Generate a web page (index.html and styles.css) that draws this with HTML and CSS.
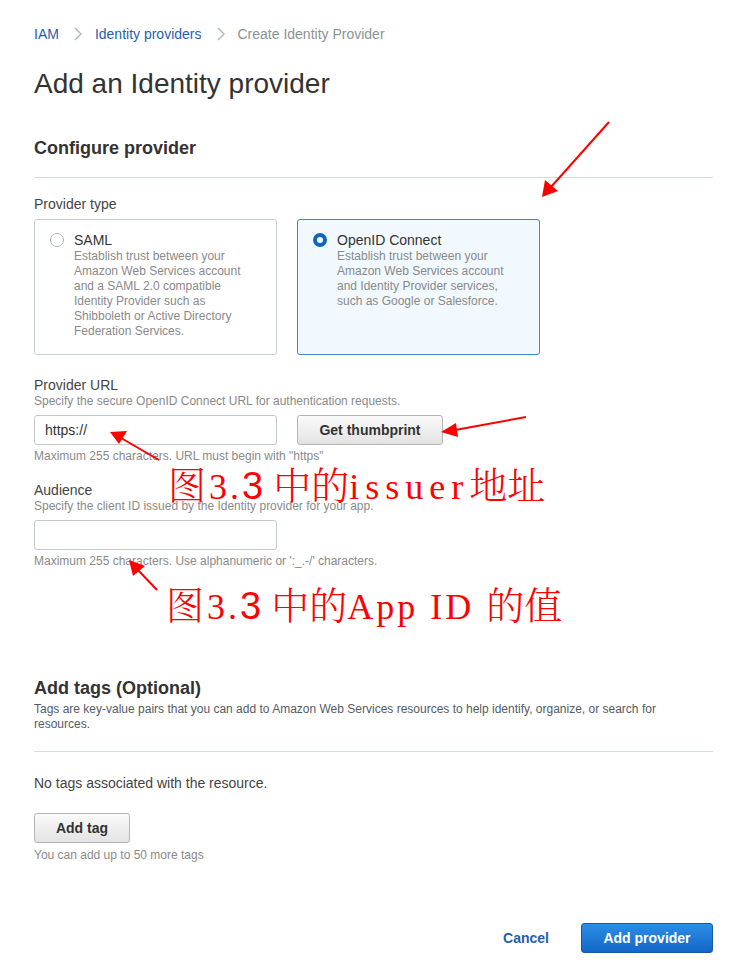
FILE: index.html
```html
<!DOCTYPE html>
<html lang="en">
<head>
<meta charset="utf-8">
<title>Create Identity Provider</title>
<link rel="stylesheet" href="styles.css">
</head>
<body>
<div class="page">
  <nav class="crumbs">
    <a class="crumb-link" href="#">IAM</a>
    <span class="chev"><svg width="10" height="14" viewBox="0 0 10 14"><path d="M2 1l6 6-6 6" fill="none" stroke="#aab7b8" stroke-width="1.4"/></svg></span>
    <a class="crumb-link" href="#">Identity providers</a>
    <span class="chev"><svg width="10" height="14" viewBox="0 0 10 14"><path d="M2 1l6 6-6 6" fill="none" stroke="#aab7b8" stroke-width="1.4"/></svg></span>
    <span class="crumb-current">Create Identity Provider</span>
  </nav>

  <h1 class="title">Add an Identity provider</h1>

  <section class="section">
    <h2 class="section-head">Configure provider</h2>

    <div class="field-label">Provider type</div>
    <div class="cards">
      <label class="card">
        <span class="radio"></span>
        <span class="card-body">
          <span class="card-title">SAML</span>
          <span class="card-desc">Establish trust between your Amazon Web Services account and a SAML 2.0 compatible Identity Provider such as Shibboleth or Active Directory Federation Services.</span>
        </span>
      </label>
      <label class="card card-selected">
        <span class="radio radio-on"></span>
        <span class="card-body">
          <span class="card-title">OpenID Connect</span>
          <span class="card-desc">Establish trust between your Amazon Web Services account and Identity Provider services, such as Google or Salesforce.</span>
        </span>
      </label>
    </div>

    <div class="field first-field">
      <div class="field-label">Provider URL</div>
      <div class="field-desc">Specify the secure OpenID Connect URL for authentication requests.</div>
      <div class="input-row">
        <div class="input">https://</div>
        <button class="btn">Get thumbprint</button>
      </div>
      <div class="field-hint">Maximum 255 characters. URL must begin with "https"</div>
    </div>

    <div class="field">
      <div class="field-label">Audience</div>
      <div class="field-desc">Specify the client ID issued by the Identity provider for your app.</div>
      <div class="input-row">
        <div class="input"></div>
      </div>
      <div class="field-hint">Maximum 255 characters. Use alphanumeric or ':_.-/' characters.</div>
    </div>
  </section>

  <section class="tags">
    <h2 class="tags-head">Add tags (Optional)</h2>
    <p class="tags-desc">Tags are key-value pairs that you can add to Amazon Web Services resources to help identify, organize, or search for resources.</p>
    <p class="no-tags">No tags associated with the resource.</p>
    <button class="btn btn-tag">Add tag</button>
    <div class="field-hint tag-hint">You can add up to 50 more tags</div>
  </section>

  <footer class="actions">
    <a class="cancel" href="#">Cancel</a>
    <button class="btn-primary">Add provider</button>
  </footer>

  <div class="note note-1">图<span class="n-lat n-three">3.</span><span class="n-num">3</span>中的<span class="n-lat n-issuer">issuer</span>地址</div>
  <div class="note note-2">图<span class="n-lat n-three">3.</span><span class="n-num">3</span>中的<span class="n-lat n-app">App ID </span>的值</div>

  <svg class="arrows" width="748" height="974" viewBox="0 0 748 974">
    <g stroke="#ff0000" stroke-width="2" fill="none">
      <line x1="609" y1="122" x2="551" y2="187"/>
      <line x1="526" y1="417" x2="455" y2="430"/>
      <line x1="159" y1="460" x2="121" y2="438"/>
      <line x1="157" y1="590" x2="137" y2="569"/>
    </g>
    <g fill="#ff0000">
      <polygon points="542,197 545,180 558,191"/>
      <polygon points="441,432 456,423 458,437"/>
      <polygon points="110,432 127,431 119,444"/>
      <polygon points="129,560 145,566 133,576"/>
    </g>
  </svg>
</div>
</body>
</html>
```

FILE: styles.css
```css
* { box-sizing: border-box; }

html, body {
  margin: 0;
  padding: 0;
  background: #ffffff;
}

body {
  font-family: "Liberation Sans", Arial, sans-serif;
  color: #333333;
}

.page {
  position: relative;
  width: 748px;
  min-height: 974px;
  padding: 24px 35px 0 34px;
}

.crumbs {
  display: flex;
  align-items: center;
  height: 20px;
  font-size: 14px;
}

.crumb-link {
  color: #1f5fb0;
  text-decoration: none;
}

.chev {
  display: flex;
  align-items: center;
  margin: 0 12px 0 14px;
}

.crumb-current {
  color: #8a9394;
}

.title {
  margin: 23px 0 0;
  font-size: 28px;
  line-height: 34px;
  font-weight: normal;
  color: #333333;
}

.section-head {
  margin: 36px 0 0;
  padding-bottom: 18px;
  border-bottom: 1px solid #d5dbdb;
  font-size: 18px;
  line-height: 22px;
  font-weight: bold;
  color: #333333;
}

.field-label {
  margin-top: 17px;
  font-size: 14px;
  line-height: 18px;
  color: #444444;
}

.cards {
  display: flex;
  gap: 20px;
  margin-top: 6px;
}

.card {
  display: flex;
  width: 243px;
  height: 136px;
  padding: 12px 14px 0 15px;
  border: 1px solid #c9cfcf;
  border-radius: 3px;
  background: #ffffff;
}

.card-selected {
  border-color: #3d87d0;
  background: #f1f8fe;
}

.radio {
  flex: none;
  width: 14px;
  height: 14px;
  margin-top: 1px;
  border: 1px solid #aab7b8;
  border-radius: 50%;
  background: #ffffff;
}

.radio-on {
  border: 4px solid #0f66bd;
}

.card-body {
  display: flex;
  flex-direction: column;
  margin-left: 10px;
}

.card-title {
  font-size: 14px;
  line-height: 16px;
  color: #333333;
}

.card-desc {
  margin-top: 1px;
  font-size: 12px;
  line-height: 15px;
  color: #8a8a8a;
}

.card-selected .card-desc {
  padding-right: 4px;
}

.first-field {
  margin-top: 21px;
}

.field {
  display: flex;
  flex-direction: column;
}

.field + .field {
  margin-top: 17px;
}

.field .field-label {
  margin-top: 0;
}

.field-desc {
  font-size: 12px;
  line-height: 15px;
  color: #8a8a8a;
}

.input-row {
  display: flex;
  gap: 20px;
  margin-top: 6px;
}

.input {
  width: 243px;
  height: 30px;
  padding: 0 10px;
  border: 1px solid #c4c9c9;
  border-radius: 3px;
  font-size: 14px;
  line-height: 28px;
  color: #333333;
}

.btn {
  height: 30px;
  padding: 0 20px;
  border: 1px solid #b5b5b5;
  border-radius: 3px;
  background: linear-gradient(#fafafa, #e3e3e3);
  font-family: "Liberation Sans", Arial, sans-serif;
  font-size: 14px;
  font-weight: bold;
  color: #333333;
}

.input-row .btn {
  width: 146px;
  padding: 0;
}

.field-hint {
  margin-top: 4px;
  font-size: 12px;
  line-height: 15px;
  color: #8a8a8a;
}

.tags {
  margin-top: 108px;
}

.tags-head {
  margin: 0;
  font-size: 18px;
  line-height: 22px;
  font-weight: bold;
  color: #333333;
}

.tags-desc {
  margin: 3px 0 0;
  padding: 0 40px 19px 0;
  border-bottom: 1px solid #d5dbdb;
  font-size: 12px;
  line-height: 15px;
  color: #545b64;
}

.no-tags {
  margin: 22px 0 0;
  font-size: 14px;
  line-height: 18px;
  color: #444444;
}

.btn-tag {
  display: block;
  width: 96px;
  margin-top: 21px;
  padding: 0;
}

.tag-hint {
  margin-top: 5px;
}

.actions {
  display: flex;
  justify-content: flex-end;
  align-items: center;
  gap: 32px;
  margin-top: 60px;
}

.cancel {
  font-size: 14px;
  font-weight: bold;
  color: #1f5fb0;
  text-decoration: none;
}

.btn-primary {
  width: 132px;
  height: 30px;
  border: 1px solid #135ca5;
  border-radius: 3px;
  background: linear-gradient(#2b8ee6, #1466c6);
  font-family: "Liberation Sans", Arial, sans-serif;
  font-size: 14px;
  font-weight: bold;
  color: #ffffff;
}

.note {
  position: absolute;
  color: #ff0000;
  font-family: "Noto Serif CJK SC", "Noto Sans CJK SC", serif;
  font-weight: 300;
  font-size: 38px;
  line-height: 40px;
  white-space: pre;
}

.note-1 {
  left: 168px;
  top: 463px;
}

.note-2 {
  left: 166px;
  top: 583px;
}

.n-lat {
  font-family: "Liberation Serif", serif;
  font-weight: normal;
  font-size: 36px;
}

.n-three {
  margin-left: 3px;
  letter-spacing: 3px;
}

.n-num {
  font-family: "Liberation Sans", Arial, sans-serif;
  font-size: 38px;
  margin-right: 10px;
}

.n-issuer {
  letter-spacing: 6px;
}

.n-app {
  letter-spacing: 3px;
}

.arrows {
  position: absolute;
  left: 0;
  top: 0;
  pointer-events: none;
}
```
